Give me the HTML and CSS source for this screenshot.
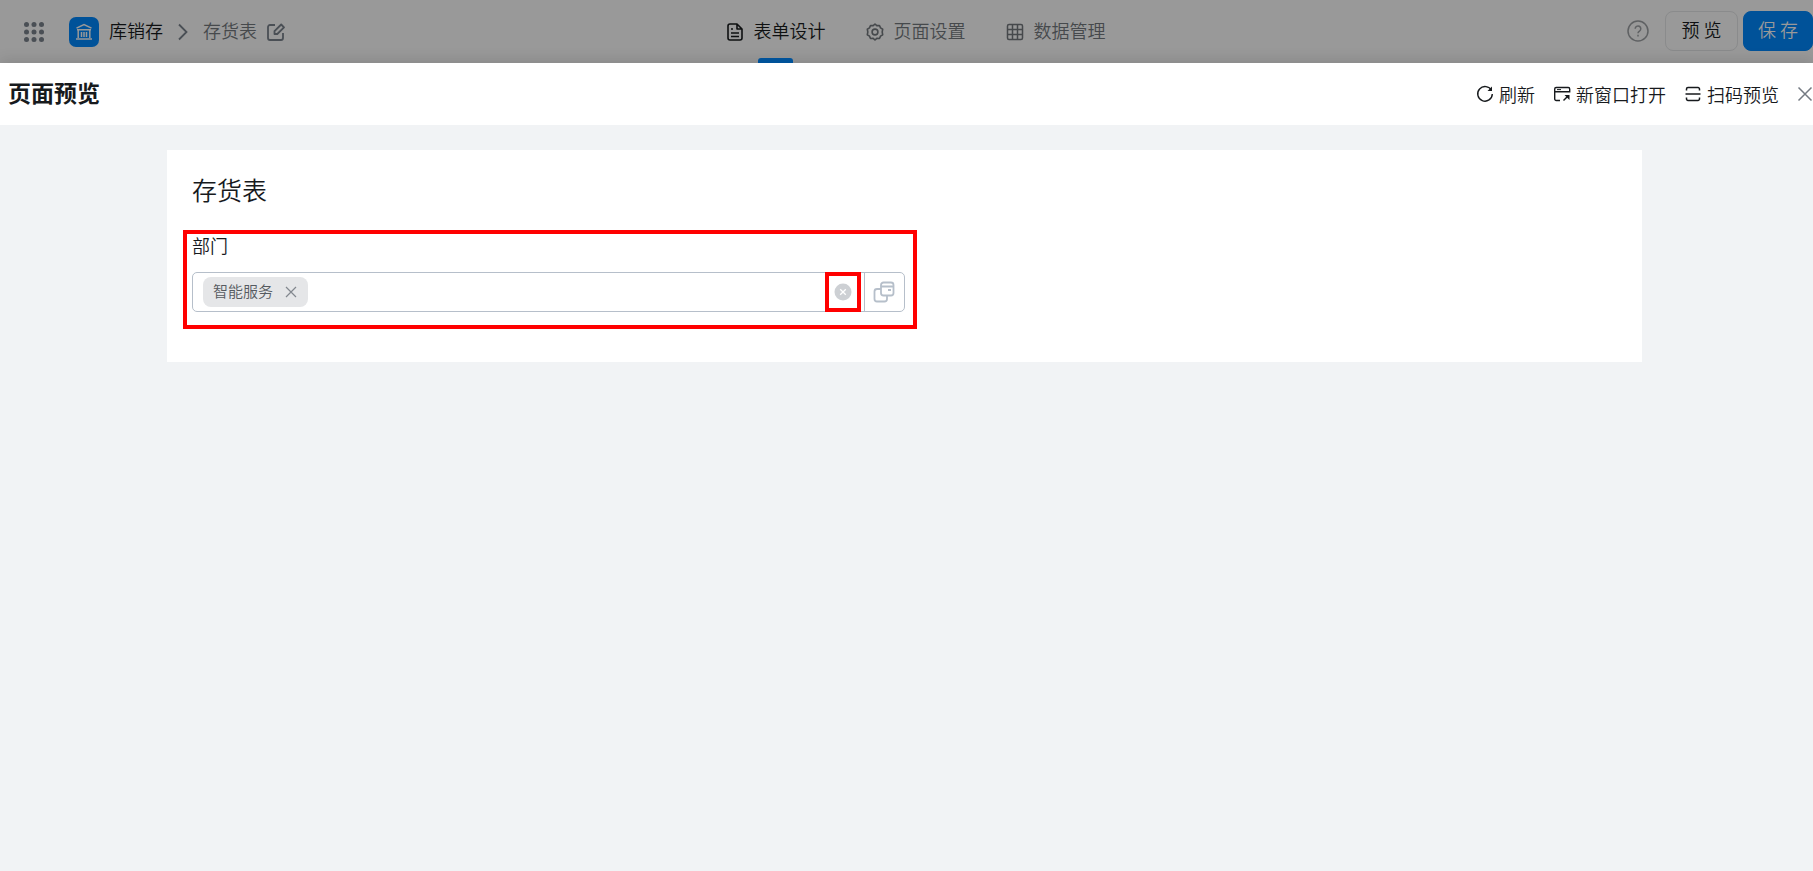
FILE: index.html
```html
<!DOCTYPE html>
<html lang="zh-CN">
<head>
<meta charset="utf-8">
<title>页面预览</title>
<link rel="stylesheet" href="styles.css">
</head>
<body>
<header class="topbar">
  <nav class="crumbs" aria-label="路径">
    <button class="icon-btn apps" aria-label="应用">
      <svg width="20" height="20" viewBox="0 0 20 20" fill="#4a4f55"><circle cx="2.5" cy="2.5" r="2.5"/><circle cx="10" cy="2.5" r="2.5"/><circle cx="17.500" cy="2.5" r="2.5"/><circle cx="2.5" cy="10" r="2.5"/><circle cx="10" cy="10" r="2.5"/><circle cx="17.500" cy="10" r="2.5"/><circle cx="2.5" cy="17.500" r="2.5"/><circle cx="10" cy="17.500" r="2.5"/><circle cx="17.500" cy="17.500" r="2.5"/></svg>
    </button>
    <span class="app-logo">
      <svg width="18" height="18" viewBox="0 0 18 18" fill="none" stroke="#999" stroke-width="1.500"><path d="M1.500 5.200 9 1.500l7.500 3.700"/><path d="M2 6.800h14M3.200 7v8M14.800 7v8M6.500 9v5M9 9v5M11.500 9v5M1 16h16"/></svg>
    </span>
    <a class="crumb" href="#">库销存</a>
    <svg class="chevron" width="12" height="18" viewBox="0 0 12 18" fill="none" stroke="#4a4f55" stroke-width="1.800"><path d="M2 1.500 9.500 9 2 16.500"/></svg>
    <span class="crumb muted">存货表</span>
    <button class="icon-btn edit" aria-label="编辑名称">
      <svg width="18" height="18" viewBox="0 0 18 18" fill="none" stroke="#4a4f55" stroke-width="1.800" stroke-linejoin="round"><path d="M8 2H3a2 2 0 0 0-2 2v11a2 2 0 0 0 2 2h11a2 2 0 0 0 2-2V10"/><path d="M7.500 11V8.200L14.200 1.500 17 4.300 10.300 11z"/></svg>
    </button>
  </nav>
  <nav class="tabs" aria-label="设计步骤">
    <a class="tab active" href="#">
      <svg width="18" height="18" viewBox="0 0 18 18" fill="none" stroke="currentColor" stroke-width="1.600" stroke-linejoin="round"><path d="M11 1H4a2 2 0 0 0-2 2v12a2 2 0 0 0 2 2h10a2 2 0 0 0 2-2V6zV6h5M5 6h2M5 10h8M5 13.500h8"/></svg>
      <span class="tab-text">表单设计</span></a>
    <a class="tab" href="#">
      <svg width="18" height="18" viewBox="0 0 18 18" fill="none" stroke="currentColor" stroke-width="1.600" stroke-linejoin="round"><path d="M7.200 2.600 9 1l1.800 1.600L13.500 2.500l1 2.400 2.200 1.300L16.200 9l.5 2.800-2.200 1.300-1 2.400-2.700-.1L9 17l-1.800-1.600-2.700.1-1-2.400-2.200-1.300L1.800 9l-.5-2.800 2.200-1.300 1-2.400z"/><circle cx="9" cy="9" r="2.900"/></svg>
      <span class="tab-text">页面设置</span></a>
    <a class="tab" href="#">
      <svg width="18" height="18" viewBox="0 0 18 18" fill="none" stroke="currentColor" stroke-width="1.500"><rect x="1.500" y="1.500" width="15" height="15" rx="1.500"/><path d="M1.500 6.500h15M1.500 11.500h15M6.500 1.500v15M11.500 1.500v15"/></svg>
      <span class="tab-text">数据管理</span></a>
  </nav>
  <div class="tools">
    <button class="icon-btn help" aria-label="帮助">
      <svg width="22" height="22" viewBox="0 0 22 22" fill="none" stroke="#5f6163" stroke-width="1.500"><circle cx="11" cy="11" r="10"/><path d="M8.200 8.800a2.800 2.800 0 1 1 4.300 2.300c-1 .7-1.500 1.100-1.500 2.200M11 14.800v1.700"/></svg>
    </button>
    <button class="btn">预 览</button>
    <button class="btn primary">保 存</button>
  </div>
</header>
<main class="drawer">
  <div class="drawer-head">
    <h1 class="drawer-title">页面预览</h1>
    <div class="actions">
      <button class="action">
        <svg width="18" height="18" viewBox="0 0 18 18" fill="none" stroke="currentColor" stroke-width="1.400"><path d="M15.500 5.500A7.300 7.300 0 1 0 16.300 9"/><path d="M16 1.500v4.500h-4.500z" fill="currentColor" stroke="none"/></svg>
        刷新</button>
      <button class="action">
        <svg width="18" height="18" viewBox="0 0 18 18" fill="none" stroke="currentColor" stroke-width="1.400"><path d="M7 15.500H3.200a1.500 1.500 0 0 1-1.500-1.500V4a1.500 1.500 0 0 1 1.500-1.500h12A1.500 1.500 0 0 1 16.700 4v3.500M1.700 6.700h15"/><path d="M4 4.600h4" stroke-width="1"/><path d="m10.500 15.500 4.500-4.500"/><path d="M11.500 10h5v5z" fill="currentColor" stroke="none"/></svg>
        新窗口打开</button>
      <button class="action">
        <svg width="18" height="18" viewBox="0 0 18 18" fill="none" stroke="currentColor" stroke-width="1.500"><path d="M2.500 5.500V4a1.500 1.500 0 0 1 1.500-1.500h10A1.500 1.500 0 0 1 15.500 4v1.500M2.500 12.500V14A1.500 1.500 0 0 0 4 15.500h10a1.500 1.500 0 0 0 1.500-1.500v-1.500M1.500 9h15"/></svg>
        扫码预览</button>
      <button class="icon-btn close" aria-label="关闭">
        <svg width="16" height="16" viewBox="0 0 16 16" fill="none" stroke="#747a82" stroke-width="1.500"><path d="m1.500 1.500 13 13m0-13-13 13"/></svg>
      </button>
    </div>
  </div>
  <form class="card">
    <h2 class="form-title">存货表</h2>
    <div class="field">
      <label class="label" for="dept">部门</label>
      <div class="control">
        <span class="tag"><span class="tag-text">智能服务</span>
          <button type="button" class="icon-btn" aria-label="移除智能服务"><svg width="12" height="12" viewBox="0 0 12 12" fill="none" stroke="#82878e" stroke-width="1.200"><path d="m1 1 10 10m0-10L1 11"/></svg></button>
        </span>
        <input class="entry" id="dept" type="text">
        <button type="button" class="icon-btn clear" aria-label="清空">
          <svg width="18" height="18" viewBox="0 0 18 18"><circle cx="9" cy="9" r="8.500" fill="#cdd0d4"/><path d="m6.200 6.200 5.600 5.600m0-5.600-5.600 5.600" stroke="#fff" stroke-width="1.300"/></svg>
        </button>
        <button type="button" class="icon-btn pick" aria-label="选择部门">
          <svg width="22" height="22" viewBox="0 0 22 22" fill="none" stroke="#b6bfca" stroke-width="1.800"><rect x="8" y="1.500" width="12.500" height="13" rx="2.500"/><path d="M8 5.500h12.500M15 9h3M8 8H4a2.500 2.500 0 0 0-2.500 2.500V18A2.500 2.500 0 0 0 4 20.500h7.500A2.500 2.500 0 0 0 14 18v-3.500"/></svg>
        </button>
      </div>
    </div>
  </form>
</main>
</body>
</html>
```
FILE: styles.css
```css
* { box-sizing: border-box; }

body {
  margin: 0;
  min-height: 100vh;
  display: flex;
  flex-direction: column;
  overflow-x: hidden;
  background: #f1f3f5;
  color: #171a1d;
  font-family: "Noto Sans CJK SC", sans-serif;
  font-size: 18px;
  font-weight: 350;
  line-height: 26px;
}

a { color: inherit; text-decoration: none; }

button { font: inherit; color: inherit; cursor: pointer; }

svg { display: block; flex: none; }

.icon-btn {
  display: flex;
  align-items: center;
  justify-content: center;
  padding: 0;
  border: 0;
  background: none;
}

.topbar {
  display: grid;
  grid-template-columns: 1fr auto 1fr;
  height: 63px;
  background: #999;
  color: #0e1011;
}

.crumbs { display: flex; align-items: center; padding-left: 24px; }
.crumb, .tab-text { padding-bottom: 4px; }
.app-logo {
  display: flex;
  align-items: center;
  justify-content: center;
  width: 30px;
  height: 30px;
  margin: 0 10px 0 25px;
  border-radius: 7px;
  background: #005299;
}
.chevron { margin: 0 14px; }
.muted { color: #46494c; }
.edit { margin-left: 10px; }

.tabs { display: flex; gap: 40px; margin-left: 18px; }
.tab {
  position: relative;
  display: flex;
  align-items: center;
  gap: 10px;
  color: #46494c;
}
.active { color: #0e1011; }
.active::after {
  content: "";
  position: absolute;
  left: 50%;
  bottom: 0;
  width: 35px;
  height: 5px;
  margin-left: -18px;
  border-radius: 3px 3px 0 0;
  background: #005299;
}

.tools {
  display: flex;
  align-items: center;
  justify-content: flex-end;
  padding-bottom: 1px;
}
.help { margin-right: 16px; }
.btn {
  height: 40px;
  width: 73px;
  padding: 0 0 4px;
  border: 1px solid #8a8b8c;
  border-radius: 8px;
  background: none;
}
.primary {
  width: 70px;
  margin-left: 5px;
  border-color: #005299;
  background: #005299;
  color: #999;
}

.drawer { flex: 1; box-shadow: 0 -4px 12px rgba(0, 0, 0, .1); }
.drawer-head {
  display: flex;
  align-items: center;
  justify-content: space-between;
  height: 62px;
  padding-left: 8px;
  background: #fff;
}
.drawer-title {
  margin: 0;
  padding-bottom: 4px;
  font-size: 23px;
  font-weight: 700;
  line-height: 30px;
}
.actions { display: flex; align-items: center; gap: 18px; }
.action {
  display: flex;
  align-items: center;
  gap: 5px;
  padding: 0;
  border: 0;
  background: none;
}

.card {
  margin: 25px 171px 0 167px;
  padding: 21px 25px 50px;
  background: #fff;
}
.form-title { margin: 0 0 25px; font-size: 25px; font-weight: 350; line-height: 36px; }
.field { position: relative; width: 50%; }
.field::after {
  content: "";
  position: absolute;
  inset: -2px -12px -17px -9px;
  border: 4px solid #f00;
  pointer-events: none;
}
.label { display: block; margin-bottom: 14px; }
.control {
  display: flex;
  align-items: center;
  height: 40px;
  padding-left: 10px;
  border: 1px solid #b6bfca;
  border-radius: 5px;
}
.tag {
  display: flex;
  align-items: center;
  gap: 12px;
  height: 30px;
  padding: 0 11px 0 10px;
  border-radius: 8px;
  background: #e5e6e8;
  color: #555a60;
  font-size: 15px;
}
.tag-text { padding-bottom: 2px; }
.entry {
  flex: 1;
  min-width: 0;
  border: 0;
  outline: 0;
  background: none;
  font: inherit;
}
.clear { width: 36px; height: 40px; border: 4px solid #f00; margin-right: 3px; }
.pick { width: 40px; height: 38px; border-left: 1px solid #b6bfca; }
```
